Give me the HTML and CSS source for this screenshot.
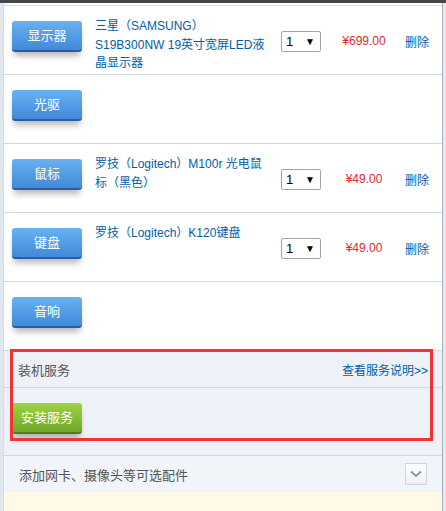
FILE: index.html
```html
<!DOCTYPE html>
<html lang="zh-CN">
<head>
    <meta charset="UTF-8">
    <meta name="viewport" content="width=device-width, initial-scale=1.0">
    <title>装机配置</title>
    <link rel="stylesheet" href="styles.css">
</head>
<body>
    <div class="topbar"></div>
    <div class="frame">
        <div class="side-left"></div>
        <div class="main">
            <div class="list">
                <div class="item">
                    <a class="btn-blue">显示器</a>
                    <div class="name">三星（SAMSUNG） S19B300NW 19英寸宽屏LED液晶显示器</div>
                    <div class="qty"><span>1</span><span class="arrow">▼</span></div>
                    <div class="price">¥699.00</div>
                    <a class="del">删除</a>
                </div>
                <div class="item">
                    <a class="btn-blue">光驱</a>
                </div>
                <div class="item">
                    <a class="btn-blue">鼠标</a>
                    <div class="name">罗技（Logitech）M100r 光电鼠标（黑色）</div>
                    <div class="qty"><span>1</span><span class="arrow">▼</span></div>
                    <div class="price">¥49.00</div>
                    <a class="del">删除</a>
                </div>
                <div class="item">
                    <a class="btn-blue">键盘</a>
                    <div class="name">罗技（Logitech）K120键盘</div>
                    <div class="qty"><span>1</span><span class="arrow">▼</span></div>
                    <div class="price">¥49.00</div>
                    <a class="del">删除</a>
                </div>
                <div class="item">
                    <a class="btn-blue">音响</a>
                </div>
            </div>

            <div class="service">
                <div class="service-head">
                    <span class="service-title">装机服务</span>
                    <a class="service-link">查看服务说明&gt;&gt;</a>
                </div>
                <div class="service-body">
                    <a class="btn-green">安装服务</a>
                </div>
                <div class="highlight"></div>
            </div>

            <div class="extra">
                <span>添加网卡、摄像头等可选配件</span>
                <span class="toggle">
                    <svg width="12" height="8" viewBox="0 0 12 8"><path d="M1 1.5 L6 6 L11 1.5" fill="none" stroke="#7d9bb5" stroke-width="2"/></svg>
                </span>
            </div>
            <div class="tips"></div>
        </div>
        <div class="side-right"></div>
    </div>
</body>
</html>
```

FILE: styles.css
```css
body {
    margin: 0;
    padding: 0;
    background-color: #fff;
    font-family: "Liberation Sans", "Noto Sans CJK SC", sans-serif;
    font-size: 12px;
    color: #333;
    height: 511px;
    overflow: hidden;
}
.topbar {
    height: 3px;
    background-color: #474747;
}
.frame {
    display: flex;
    height: 508px;
}
.side-left {
    width: 3px;
    background-color: #e1e7ee;
    border-right: 1px solid #d3dbe4;
}
.side-right {
    width: 3px;
    border-left: 1px solid #a9afb6;
    background-color: #e6eaee;
}
.main {
    flex: 1;
    padding-top: 2px;
    display: flex;
    flex-direction: column;
}
.list {
    border-top: 1px solid #cfd9e3;
}
.item {
    display: flex;
    align-items: center;
    height: 68px;
    border-bottom: 1px solid #cfd9e3;
    padding-left: 8px;
}
.btn-blue, .btn-green {
    display: block;
    width: 70px;
    height: 29px;
    line-height: 30px;
    text-align: center;
    color: #fff;
    font-size: 13px;
    border-radius: 3px;
    box-shadow: 0 6px 6px -2px rgba(0, 0, 0, 0.28);
}
.btn-blue {
    align-self: flex-start;
    margin-top: 15px;
    background: linear-gradient(#68b1f1, #4289d8);
    border-bottom: 2px solid #2a5ba6;
}
.name {
    align-self: flex-start;
    width: 174px;
    margin-top: 11px;
    margin-left: 13px;
    line-height: 18.5px;
    color: #005ea7;
}
.qty {
    width: 34px;
    height: 19px;
    margin: 2px 0 0 12px;
    padding-left: 4px;
    border: 1px solid #a3a3a3;
    border-radius: 2px;
    display: flex;
    justify-content: space-between;
    align-items: center;
    font-size: 13px;
    color: #000;
}
.qty .arrow {
    font-size: 10px;
    margin-right: 5px;
}
.price {
    width: 46px;
    margin: 2px 0 0 20px;
    text-align: center;
    color: #e3262d;
}
.del {
    margin: 2px 0 0 18px;
    color: #005ea7;
}
.service {
    position: relative;
    background-color: #eef1f7;
}
.service-head {
    height: 36px;
    display: flex;
    justify-content: space-between;
    align-items: center;
    padding: 0 14px;
    border-bottom: 1px solid #cfd9e3;
}
.service-title {
    font-size: 13px;
    color: #555;
}
.service-link {
    color: #005ea7;
}
.service-body {
    height: 68px;
    padding: 15px 0 0 8px;
    box-sizing: border-box;
    border-bottom: 1px solid #cfd9e3;
}
.btn-green {
    background: linear-gradient(#9ed43f, #6ea82a);
    border-bottom: 2px solid #4f7f1c;
}
/* 标注框 */
.highlight {
    position: absolute;
    left: 6px;
    top: -2px;
    width: 417px;
    height: 86px;
    border: 3px solid #f33333;
}
.extra {
    height: 36px;
    display: flex;
    justify-content: space-between;
    align-items: center;
    padding: 0 15px;
    background-color: #f1f4f9;
    color: #555;
    font-size: 13px;
}
.toggle {
    width: 20px;
    height: 20px;
    border: 1px solid #c8d6e0;
    background: linear-gradient(#fff, #eef0f2);
    display: flex;
    justify-content: center;
    align-items: center;
}
.tips {
    flex: 1;
    background-color: #fff9e6;
}
```
